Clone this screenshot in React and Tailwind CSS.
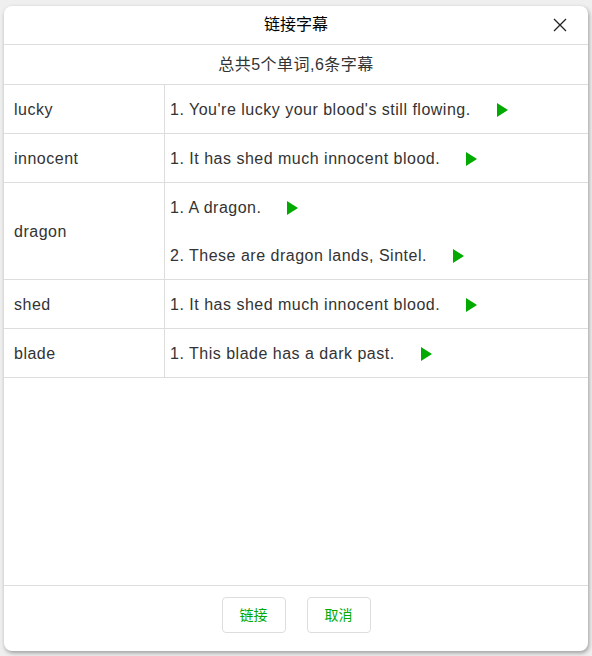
import React from "react";

const rows = [
  { word: "lucky", sentences: ["You're lucky your blood's still flowing."] },
  { word: "innocent", sentences: ["It has shed much innocent blood."] },
  { word: "dragon", sentences: ["A dragon.", "These are dragon lands, Sintel."] },
  { word: "shed", sentences: ["It has shed much innocent blood."] },
  { word: "blade", sentences: ["This blade has a dark past."] },
];

function PlayIcon() {
  return (
    <svg width="11" height="14" viewBox="0 0 11 14" className="ml-[26px] shrink-0 -mt-[1px]">
      <path d="M0 0 L11 7 L0 14 Z" fill="#00aa00" />
    </svg>
  );
}

export default function App() {
  return (
    <div
      className="w-[592px] h-[656px] bg-[#efefef] pt-[6px] pl-[4px]"
      style={{ fontFamily: '"Liberation Sans", Arial, "Noto Sans CJK SC", sans-serif' }}
    >
      <div className="w-[584px] h-[645px] bg-white rounded-lg shadow-[1px_2px_4px_rgba(0,0,0,0.35)] flex flex-col overflow-hidden">
        {/* header */}
        <div className="relative h-[39px] border-b border-[#dddddd] flex items-center justify-center text-[16px] text-black">
          链接字幕
          <button className="absolute right-[21px] top-[12px] w-[14px] h-[14px]">
            <svg width="14" height="14" viewBox="0 0 14 14">
              <path d="M1 1 L13 13 M13 1 L1 13" stroke="#222" strokeWidth="1.3" fill="none" />
            </svg>
          </button>
        </div>
        <div className="h-[40px] border-b border-[#dddddd] flex items-center justify-center pt-[1px] text-[16px] tracking-[0.5px] text-[#333]">
          总共5个单词,6条字幕
        </div>

        {/* table */}
        <div className="flex-1">
          {rows.map((r) => (
            <div key={r.word} className="flex border-b border-[#dddddd] text-[16px] tracking-[0.5px] text-[#333]">
              <div className="w-[161px] shrink-0 border-r border-[#dddddd] flex items-center pl-[10px] pt-[2px]">
                {r.word}
              </div>
              <div className="flex-1 flex flex-col pl-[5px]">
                {r.sentences.map((s, i) => (
                  <div key={i} className="h-[48px] flex items-center pt-[2px]">
                    <span>
                      {i + 1}. {s}
                    </span>
                    <PlayIcon />
                  </div>
                ))}
              </div>
            </div>
          ))}
        </div>

        {/* footer */}
        <div className="h-[66px] border-t border-[#dddddd] flex items-start justify-center gap-[21px] pt-[11px]">
          <button className="w-[64px] h-[36px] border border-[#dddddd] rounded-[4px] text-[14px] text-[#00aa00] bg-white">
            链接
          </button>
          <button className="w-[64px] h-[36px] border border-[#dddddd] rounded-[4px] text-[14px] text-[#00aa00] bg-white">
            取消
          </button>
        </div>
      </div>
    </div>
  );
}
